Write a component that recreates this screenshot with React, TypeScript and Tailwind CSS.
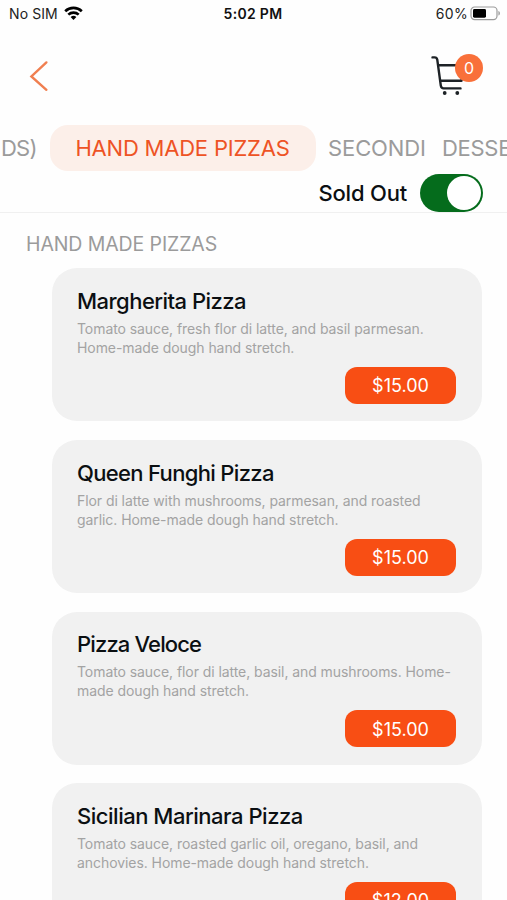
import React, { useState } from 'react';

interface MenuItem {
  name: string;
  nameClass: string;
  description: string;
  price: string;
}

const items: MenuItem[] = [
  {
    name: 'Margherita Pizza',
    nameClass: 'tracking-[-0.53px]',
    description: 'Tomato sauce, fresh flor di latte, and basil parmesan.\nHome-made dough hand stretch.',
    price: '$15.00',
  },
  {
    name: 'Queen Funghi Pizza',
    nameClass: 'tracking-[-0.67px]',
    description: 'Flor di latte with mushrooms, parmesan, and roasted\ngarlic. Home-made dough hand stretch.',
    price: '$15.00',
  },
  {
    name: 'Pizza Veloce',
    nameClass: 'tracking-[-0.85px]',
    description: 'Tomato sauce, flor di latte, basil, and mushrooms. Home-\nmade dough hand stretch.',
    price: '$15.00',
  },
  {
    name: 'Sicilian Marinara Pizza',
    nameClass: 'tracking-[-0.48px]',
    description: 'Tomato sauce, roasted garlic oil, oregano, basil, and\nanchovies. Home-made dough hand stretch.',
    price: '$12.00',
  },
];

function WifiIcon() {
  return (
    <svg className="h-[15px] w-[19px]" viewBox="0 0 19 15" fill="none" stroke="#000" strokeWidth="2.6">
      <path d="M1.2 5.2C5.8 .7 13.2 .7 17.8 5.2" />
      <path d="M4.3 8.6C7.2 5.9 11.8 5.9 14.7 8.6" />
      <path d="M6.6 11 Q9.5 8.6 12.4 11 L9.5 14Z" fill="#000" stroke="none" />
    </svg>
  );
}

function BatteryIcon() {
  return (
    <svg className="h-[15px] w-[31px]" viewBox="0 0 31 15" fill="none">
      <rect x="1" y="1" width="26" height="12.6" rx="3.6" stroke="#9b9b9b" strokeWidth="1.2" />
      <rect x="3" y="3" width="13" height="8.7" rx="1.4" fill="#000" />
      <path d="M28.4 5v4.6c2-.7 2-3.9 0-4.6Z" fill="#9b9b9b" />
    </svg>
  );
}

function CartIcon() {
  return (
    <svg className="h-10 w-9" viewBox="0 0 36 40" fill="none" stroke="#1d2226" strokeWidth="2.4" strokeLinecap="round" strokeLinejoin="round">
      <path d="M1.5 2.4H3.6Q5.8 2.4 6.3 4.8L9.8 30.6Q10.3 33.4 12.5 33.4H29.5" />
      <path d="M7.2 10.3H33L30.5 25.8H9.4" />
      <circle cx="13.7" cy="38" r="1.9" fill="#1d2226" stroke="none" />
      <circle cx="26.3" cy="38" r="1.9" fill="#1d2226" stroke="none" />
    </svg>
  );
}

function StatusBar() {
  return (
    <div className="grid h-7 shrink-0 grid-cols-3 items-center pr-[6px] pb-px pl-[9px] text-black">
      <div className="flex items-center gap-[6px]">
        <span className="text-[14px] tracking-[0.1px] whitespace-nowrap text-[#222]">No SIM</span>
        <WifiIcon />
      </div>
      <div className="text-center text-[14px] font-semibold tracking-[0.3px] whitespace-nowrap text-[#111]">
        <span className="-ml-1">5:02 PM</span>
      </div>
      <div className="flex items-center justify-end gap-[2px]">
        <span className="text-[14px] tracking-[0.3px] text-[#222]">60%</span>
        <BatteryIcon />
      </div>
    </div>
  );
}

function ItemCard({ item }: { item: MenuItem }) {
  return (
    <div className="flex h-[153px] shrink-0 flex-col rounded-[25px] bg-[#f1f1f1] pr-[26px] pl-[25px]">
      <h3 className={`mt-[18.5px] text-[22px] leading-[28px] font-medium whitespace-nowrap text-[#0b0f12] ${item.nameClass}`}>
        {item.name}
      </h3>
      <p className="mt-[4px] text-[14px] leading-[19px] tracking-[-0.07px] whitespace-pre text-[#a3a3a3]">
        {item.description}
      </p>
      <button className="mt-[10px] h-[37px] w-[111px] shrink-0 self-end rounded-xl bg-[#f84e14] pt-px text-[18px] text-white">
        {item.price}
      </button>
    </div>
  );
}

export default function App() {
  const [soldOut, setSoldOut] = useState(true);

  return (
    <div className="flex h-[900px] w-[507px] flex-col overflow-hidden bg-[#fefefe] font-['Inter',sans-serif]">
      <StatusBar />

      {/* Header */}
      <div className="flex h-[97px] shrink-0 items-start justify-between pr-[24px] pl-[29px]">
        <button className="mt-[32px]" aria-label="Back">
          <svg className="h-8 w-5" viewBox="0 0 20 32" fill="none" stroke="#f07f50" strokeWidth="2.4" strokeLinecap="round">
            <path d="M17.4 2.4 2.4 16.4 17.4 29.8" />
          </svg>
        </button>
        <button className="relative mt-[27px] w-[52px]" aria-label="Cart">
          <CartIcon />
          <span className="absolute -top-px right-0 flex size-7 items-center justify-center rounded-full bg-[#f9703a] text-[16px] text-white">
            0
          </span>
        </button>
      </div>

      {/* Category tabs */}
      <div className="flex h-[46px] shrink-0 items-center overflow-hidden text-[22px] whitespace-nowrap text-[#9b9b9b]">
        <span className="ml-px w-[35px] shrink-0 tracking-[-0.8px]">DS)</span>
        <span className="ml-[14px] flex h-[46px] w-[266px] shrink-0 items-center justify-center rounded-[18px] bg-[#fcefe9] pr-px tracking-[-0.2px] text-[#ee5325]">
          HAND MADE PIZZAS
        </span>
        <span className="ml-[12px] w-[98px] shrink-0 tracking-[-0.1px]">SECONDI</span>
        <span className="ml-4 tracking-[-0.3px]">DESSE</span>
      </div>

      {/* Sold out toggle */}
      <div className="flex h-[42px] shrink-0 items-center justify-end gap-[13px] border-b border-[#f0f0f0] pt-[3px] pr-[24px]">
        <span className="pt-px text-[22px] font-medium tracking-[-0.2px] text-[#0b0f12]">Sold Out</span>
        <button
          onClick={() => setSoldOut(!soldOut)}
          className={`flex h-[38px] w-[63px] items-center rounded-full p-[2px] ${
            soldOut ? 'justify-end bg-[#056c1c]' : 'justify-start bg-gray-300'
          }`}
        >
          <span className="size-[34px] rounded-full bg-white" />
        </button>
      </div>

      {/* Menu list */}
      <h2 className="mt-[17px] ml-[26px] h-[28px] shrink-0 text-[19.5px] leading-[28px] tracking-[-0.1px] whitespace-nowrap text-[#9b9b9b]">
        HAND MADE PIZZAS
      </h2>
      <div className="mt-[10.4px] mr-[25px] ml-[52px] flex flex-col gap-[18.7px]">
        {items.map((item) => (
          <ItemCard key={item.name} item={item} />
        ))}
      </div>
    </div>
  );
}
